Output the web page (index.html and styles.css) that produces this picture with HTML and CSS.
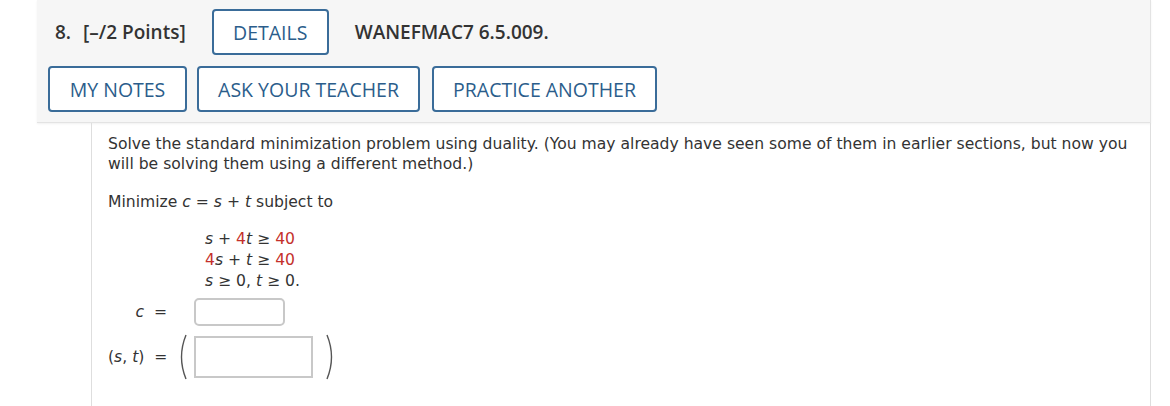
FILE: index.html
```html
<!DOCTYPE html>
<html lang="en">
<head>
    <meta charset="UTF-8">
    <title>WANEFMAC7 6.5.009</title>
    <link rel="stylesheet" href="styles.css">
</head>
<body>
<div class="question">
    <div class="qheader">
        <div class="toprow">
            <span class="qnum">8.</span>
            <span class="points">[–/2 Points]</span>
            <button class="qbtn details">DETAILS</button>
            <span class="qref">WANEFMAC7 6.5.009.</span>
        </div>
        <div class="btnrow">
            <button class="qbtn">MY NOTES</button>
            <button class="qbtn">ASK YOUR TEACHER</button>
            <button class="qbtn">PRACTICE ANOTHER</button>
        </div>
    </div>

    <div class="qbody">
        <p class="intro">Solve the standard minimization problem using duality. (You may already have seen some of them in earlier sections, but now you will be solving them using a different method.)</p>
        <p class="task">Minimize <i>c</i> = <i>s</i> + <i>t</i> subject to</p>
        <div class="system">
            <div><i>s</i> + <span class="red">4</span><i>t</i> ≥ <span class="red">40</span></div>
            <div><span class="red">4</span><i>s</i> + <i>t</i> ≥ <span class="red">40</span></div>
            <div><i>s</i> ≥ 0, <i>t</i> ≥ 0.</div>
        </div>
        <div class="answers">
            <div class="lbl"><i>c</i> &nbsp;=</div>
            <div></div>
            <div><input type="text" class="ans small"></div>
            <div></div>

            <div class="lbl">(<i>s</i>, <i>t</i>) &nbsp;=</div>
            <div class="paren">
                <svg width="12" height="46" viewBox="0 0 12 46"><path d="M10 1 Q1 23 10 45" fill="none" stroke="#555" stroke-width="1.4"/></svg>
            </div>
            <div><input type="text" class="ans big"></div>
            <div class="paren right">
                <svg width="12" height="46" viewBox="0 0 12 46"><path d="M2 1 Q11 23 2 45" fill="none" stroke="#555" stroke-width="1.4"/></svg>
            </div>
        </div>
    </div>
</div>
</body>
</html>
```

FILE: styles.css
```css
body{
    margin: 0;
    background-color: white;
    color: #333;
}
.question{
    margin-left: 37px;
    width: 1114px;
}
.qheader{
    background-color: #f6f6f6;
    border-right: 1px solid #e3e3e3;
    border-bottom: 1px solid #e3e3e3;
    box-shadow: 0 1px 2px rgba(0,0,0,0.06);
    padding: 9px 0 10px 11px;
    font-family: "Open Sans", sans-serif;
}
.toprow{
    display: flex;
    align-items: center;
    padding-left: 7px;
    height: 46px;
}
.qnum, .points, .qref{
    font-size: 19px;
    font-weight: 600;
    color: #333;
}
.points{
    margin-left: 12px;
}
.qref{
    margin-left: 26px;
}
.qbtn{
    font-family: "Open Sans", sans-serif;
    font-size: 19.5px;
    color: #2b5d8b;
    background-color: white;
    border: 2px solid #3a6c99;
    border-radius: 4px;
    height: 46px;
    padding: 0;
    cursor: pointer;
}
.details{
    margin-left: 26px;
    width: 117px;
}
.btnrow{
    display: flex;
    gap: 10px;
    margin-top: 11px;
}
.btnrow .qbtn:first-child{
    width: 139px;
}
.btnrow .qbtn:nth-child(2){
    width: 223px;
}
.btnrow .qbtn:nth-child(3){
    width: 225px;
    margin-left: 2px;
}
.qbody{
    margin-left: 54px;
    border-left: 1px solid #dedede;
    border-right: 1px solid #dedede;
    padding: 11px 0 30px 16px;
    font-family: "DejaVu Sans", Verdana, sans-serif;
    font-size: 15.6px;
    line-height: 20px;
    color: #333;
}
.qbody p{
    margin: 0;
}
.intro{
    padding-right: 8px;
}
.task{
    margin-top: 18px !important;
}
.system{
    margin: 17px 0 0 97px;
    line-height: 21px;
}
.red{
    color: #c4302b;
}
.answers{
    display: grid;
    grid-template-columns: 62px 24px auto auto;
    justify-content: start;
    align-items: center;
    margin-top: 6px;
    row-gap: 8px;
}
.lbl{
    text-align: right;
    white-space: nowrap;
    padding-right: 3px;
}
.paren{
    display: flex;
    justify-content: center;
}
.paren.right{
    margin-left: 12px;
}
.ans{
    display: block;
    border: 2px solid #c8c8c8;
    background: white;
    box-sizing: border-box;
    margin: 0;
}
.small{
    width: 91px;
    height: 28px;
    border-radius: 5px;
}
.big{
    width: 119px;
    height: 42px;
    border-radius: 0;
}
```
